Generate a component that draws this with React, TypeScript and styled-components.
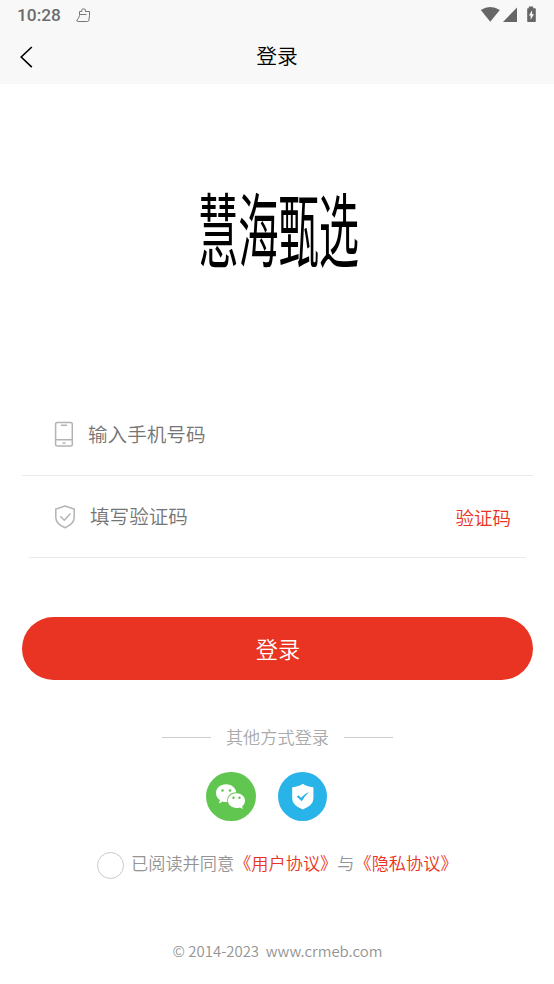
import React from "react";
import styled, { createGlobalStyle } from "styled-components";

const GlobalStyle = createGlobalStyle`
  * { box-sizing: border-box; }
  body {
    margin: 0;
    background: #fff;
    font-family: "Noto Sans CJK SC", sans-serif;
  }
`;

const Screen = styled.div`
  width: 554px;
  height: 984px;
  overflow: hidden;
  display: flex;
  flex-direction: column;
  background: #fff;
`;

const Header = styled.header`
  height: 84px;
  background: #f8f8f8;
`;

const StatusBar = styled.div`
  height: 30px;
  padding: 0 17px;
  display: flex;
  align-items: center;
  color: #6c6c6c;
`;

const Clock = styled.span`
  font: 500 17.3px/30px Roboto, sans-serif;
  width: 59px;
`;

const StatusIcons = styled.svg`
  margin-left: auto;
`;

const NavBar = styled.div`
  height: 54px;
  display: grid;
  grid-template-columns: 60px 1fr 60px;
  align-items: center;
`;

const BackButton = styled.button`
  justify-self: start;
  border: 0;
  padding: 0 0 0 19px;
  background: none;
  height: 24px;
`;

const Title = styled.h1`
  margin: 0;
  padding-bottom: 4px;
  font-size: 20.8px;
  line-height: 30px;
  font-weight: 350;
  text-align: center;
  color: #000;
`;

const LogoArea = styled.div`
  height: 309px;
  padding: 113px 0 0 3px;
  text-align: center;
`;

const LogoText = styled.div`
  font-size: 40.3px;
  line-height: 60px;
  font-weight: 400;
  color: #000;
  transform: scaleY(2);
`;

const Field = styled.label<{ $inset: number }>`
  height: ${(p) => (p.$inset ? 82 : 83)}px;
  margin: 0 ${(p) => (p.$inset ? 28 : 21)}px 0 ${(p) => 22 + p.$inset}px;
  padding: 0 15px 0 ${(p) => 32 - p.$inset}px;
  border-bottom: 1px solid #ebebeb;
  display: flex;
  align-items: center;
`;

const Input = styled.input<{ $lift: number }>`
  flex: 1;
  min-width: 0;
  border: 0;
  outline: 0;
  padding: 0 0 ${(p) => p.$lift}px;
  margin-left: 14px;
  height: 32px;
  background: none;
  font: 350 19.6px/28px "Noto Sans CJK SC", sans-serif;
  &::placeholder { color: #757575; opacity: 1; }
`;

const CodeButton = styled.button`
  border: 0;
  padding: 0;
  background: none;
  color: #e93323;
  font: 350 18.5px/28px "Noto Sans CJK SC", sans-serif;
`;

const LoginButton = styled.button`
  height: 63px;
  margin: 59px 21px 0 22px;
  padding: 0 0 2px 1px;
  border: 0;
  border-radius: 32px;
  background: #e93323;
  color: #fff;
  font: 350 22.2px/32px "Noto Sans CJK SC", sans-serif;
`;

const Divider = styled.div`
  margin: 44px 0 0 1px;
  height: 26px;
  display: flex;
  align-items: center;
  justify-content: center;
  gap: 15px;
  color: #aaa;
  font-size: 17.2px;
  font-weight: 350;
  line-height: 26px;
  &::before, &::after {
    content: "";
    width: 49px;
    height: 1px;
    background: #ccc;
  }
`;

const Providers = styled.div`
  margin: 21.5px 0 0 206px;
  display: flex;
  gap: 22px;
`;

const Provider = styled.button<{ $color: string }>`
  width: 49.5px;
  height: 49.5px;
  padding: 0;
  border: 0;
  border-radius: 50%;
  background: ${(p) => p.$color};
  svg { display: block; }
`;

const Agreement = styled.div`
  margin: 30px 0 0 97px;
  height: 28px;
  display: flex;
  color: #949494;
  font-size: 17.2px;
  font-weight: 350;
  line-height: 24px;
  white-space: nowrap;
`;

const Radio = styled.span`
  width: 27px;
  height: 27px;
  margin: 1px 7px 0 0;
  border: 1px solid #c9c9c9;
  border-radius: 50%;
`;

const Policy = styled.span`
  color: #e93323;
`;

const Footer = styled.footer`
  margin-top: 60px;
  padding-left: 1px;
  text-align: center;
  color: #949494;
  font-size: 14.95px;
  font-weight: 350;
  line-height: 24px;
  white-space: pre;
`;

export default function App() {
  return (
    <>
      <GlobalStyle />
      <Screen lang="zh-CN">
        <Header>
          <StatusBar>
            <Clock>10:28</Clock>
            <svg width="15" height="15" viewBox="0 0 15 15" fill="none" stroke="#777" strokeWidth="1">
              <path d="M3.5 3.5h2.3V2q0-1 1-1h1.6q1 0 1 1v1.5h4.1v3.8l-.6 4.8q-.2 1.4-1.6 1.4H2.1Q.3 13.5 1 12q2-2 2.5-4.5zM3.5 6.5h7" />
            </svg>
            <StatusIcons width="57" height="18" viewBox="0 0 57 18" fill="#666">
              <path d="M.8 4Q10.3-2.2 19.8 4L10.3 15.7z" />
              <path d="M37 1.5V16H23z" />
              <path fillRule="evenodd" d="M48.8.5h4.4v1.8H55q.8 0 .8.8v12.2q0 .8-.8.8h-7q-.8 0-.8-.8V3.1q0-.8.8-.8h.8zm3.3 3.8-3.2 5.2h1.7v4.3l3.4-5.6h-1.9z" />
            </StatusIcons>
          </StatusBar>
          <NavBar>
            <BackButton aria-label="返回">
              <svg width="14" height="24" viewBox="0 0 14 24" fill="none" stroke="#000" strokeWidth="1.6">
                <path d="M12.8 2 2.2 12l10.6 10.2" />
              </svg>
            </BackButton>
            <Title>登录</Title>
          </NavBar>
        </Header>
        <LogoArea>
          <LogoText>慧海甄选</LogoText>
        </LogoArea>
        <Field $inset={0}>
          <svg width="20" height="26" viewBox="0 0 20 26" fill="none" stroke="#b3b3b3" strokeWidth="1.5">
            <rect x="1.6" y="1.4" width="16.7" height="23.6" rx="1.6" />
            <path d="M2 18.8h16M7 4.2h6M8.5 22h3" />
          </svg>
          <Input $lift={1} placeholder="输入手机号码" />
        </Field>
        <Field $inset={7}>
          <svg width="22" height="24" viewBox="0 0 22 24" fill="none" stroke="#b3b3b3" strokeWidth="1.5">
            <path d="M11 1 20.2 4v8.5q0 6.2-9.2 10.2-9.2-4-9.2-10.2V4z" />
            <path d="m6.3 11.2 4 4 6.2-6.8" />
          </svg>
          <Input $lift={3} placeholder="填写验证码" />
          <CodeButton>验证码</CodeButton>
        </Field>
        <LoginButton>登录</LoginButton>
        <Divider>其他方式登录</Divider>
        <Providers>
          <Provider $color="#61c64f" aria-label="微信">
            <svg width="50" height="50" viewBox="0 0 50 50">
              <path fill="#fff" d="M20 12.2c-5.6 0-10 3.9-10 8.8 0 3 1.5 5.4 3.9 7l-1 3.4 3.7-2q2 .6 4.8.5c-1.2-5.5 3.4-9.7 9-9.6-.9-4.8-5.2-8.1-10.4-8.1z" />
              <path fill="#fff" d="M30.5 21.3c-4.9 0-8.6 3.2-8.6 7.3s3.7 7.4 8.6 7.4q1.8 0 3.4-.5l3 1.5-.8-2.6c1.8-1.4 2.9-3.4 2.9-5.8 0-4-3.8-7.3-8.5-7.3z" />
              <g fill="#61c64f"><circle cx="16.5" cy="18.5" r="1.3" /><circle cx="24" cy="18.5" r="1.3" /><circle cx="27.5" cy="25.7" r="1.2" /><circle cx="33.5" cy="25.7" r="1.2" /></g>
            </svg>
          </Provider>
          <Provider $color="#28b3e9" aria-label="验证码登录">
            <svg width="50" height="50" viewBox="0 0 50 50">
              <path fill="#fff" d="M24.8 11.8q3.5 2.6 10.6 3.5v11.4q0 6.3-10.6 10.8-10.6-4.5-10.6-10.8V15.3q7.1-.9 10.6-3.5z" />
              <path fill="#28b3e9" d="m18.6 24.6 2-1 2.4 2.2q3.2-4 8-5.8-4.6 4.5-7.2 9.3z" />
            </svg>
          </Provider>
        </Providers>
        <Agreement>
          <Radio />
          已阅读并同意<Policy>《用户协议》</Policy>与<Policy>《隐私协议》</Policy>
        </Agreement>
        <Footer>{"© 2014-2023  www.crmeb.com"}</Footer>
      </Screen>
    </>
  );
}
